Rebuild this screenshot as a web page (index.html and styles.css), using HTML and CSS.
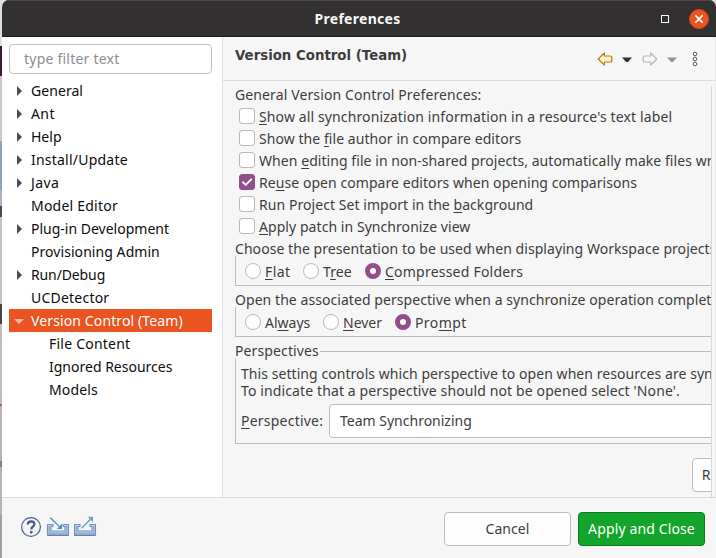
FILE: index.html
```html
<!DOCTYPE html>
<html lang="en">
<head>
<meta charset="utf-8">
<title>Preferences</title>
<link rel="stylesheet" href="styles.css">
</head>
<body>
<div class="desktop">
<div class="window">
  <header class="titlebar">
    <h1>Preferences</h1>
    <div class="window-buttons">
      <span class="maximize"></span>
      <span class="close"><svg width="20" height="20" viewBox="0 0 20 20"><path d="M6.4 6.4l7.2 7.2M13.6 6.4l-7.2 7.2" stroke="#fff" stroke-width="1.6"/></svg></span>
    </div>
  </header>
  <main class="content">
    <nav class="sidebar">
      <div class="filter ls2">type filter text</div>
      <ul class="tree">
        <li class="item parent">General</li>
        <li class="item parent ls4">Ant</li>
        <li class="item parent ls0">Help</li>
        <li class="item parent ls2">Install/Update</li>
        <li class="item parent ls4">Java</li>
        <li class="item ls2">Model Editor</li>
        <li class="item parent ls0">Plug-in Development</li>
        <li class="item">Provisioning Admin</li>
        <li class="item parent lsn">Run/Debug</li>
        <li class="item ls2">UCDetector</li>
        <li class="item open ls1">Version Control (Team)</li>
        <li class="item child ls2">File Content</li>
        <li class="item child ls0">Ignored Resources</li>
        <li class="item child ls1">Models</li>
      </ul>
    </nav>
    <section class="page">
      <div class="page-head">
        <h2>Version Control (Team)</h2>
        <div class="tools">
          <svg class="arrow" width="16" height="14" viewBox="0 0 16 14"><path d="M1.2 7L7.3 .9V4H13.2Q14.8 4 14.8 5.6V8.4Q14.8 10 13.2 10H7.3V13.1Z" fill="#fdf3c4" stroke="#b87a13" stroke-width="1.2" stroke-linejoin="round"/></svg>
          <svg class="caret" width="10" height="6" viewBox="0 0 10 6"><path d="M0 .5H10L6 5H4Z" fill="#2f3335"/></svg>
          <svg class="arrow" width="16" height="14" viewBox="0 0 16 14"><path d="M14.8 7L8.7 .9V4H2.8Q1.2 4 1.2 5.6V8.4Q1.2 10 2.8 10H8.7V13.1Z" fill="#f7f7f7" stroke="#b4b4b4" stroke-width="1.2" stroke-linejoin="round"/></svg>
          <svg class="caret" width="10" height="6" viewBox="0 0 10 6"><path d="M0 .5H10L6 5H4Z" fill="#929595"/></svg>
          <svg class="dots" width="6" height="16" viewBox="0 0 6 16" fill="#fff" stroke="#565656" stroke-width="1"><circle cx="3" cy="3" r="1.8"/><circle cx="3" cy="8" r="1.8"/><circle cx="3" cy="13" r="1.8"/></svg>
        </div>
      </div>
      <div class="viewport">
        <div class="intro ls1">General Version Control Preferences:</div>
        <div class="option"><i class="check"></i><span class="ls1"><u>S</u>how all synchronization information in a resource's text label</span></div>
        <div class="option"><i class="check"></i><span>Show the <u>f</u>ile author in compare editors</span></div>
        <div class="option"><i class="check"></i><span>When <u>e</u>diting file in non-shared projects, automatically make files writable</span></div>
        <div class="option"><i class="check on"><svg width="16" height="16" viewBox="0 0 16 16"><path d="M3.4 7.6L6.7 10.9L12.7 4.8" fill="none" stroke="#fff" stroke-width="1.8"/></svg></i><span>Re<u>u</u>se open compare editors when opening comparisons</span></div>
        <div class="option"><i class="check"></i><span>Run Project Set import in the <u>b</u>ackground</span></div>
        <div class="option"><i class="check"></i><span><u>A</u>pply patch in Synchronize view</span></div>
        <div class="group">
          <div class="legend">Choose the presentation to be used when displaying Workspace projects</div>
          <div class="radios">
            <span class="radio flat ls4"><i class="dot"></i><span><u>F</u>lat</span></span>
            <span class="radio tree-mode ls1"><i class="dot"></i><span>T<u>r</u>ee</span></span>
            <span class="radio ls2"><i class="dot on"></i><span><u>C</u>ompressed Folders</span></span>
          </div>
        </div>
        <div class="group second">
          <div class="legend">Open the associated perspective when a synchronize operation completes</div>
          <div class="radios">
            <span class="radio always ls0"><i class="dot"></i><span>Al<u>w</u>ays</span></span>
            <span class="radio never ls0"><i class="dot"></i><span><u>N</u>ever</span></span>
            <span class="radio ls4"><i class="dot on"></i><span>Pro<u>m</u>pt</span></span>
          </div>
        </div>
        <div class="group third">
          <div class="legend ruled ls1">Perspectives</div>
          <div class="persp">
            <p>This setting controls which perspective to open when resources are synchronized.</p>
            <p class="ls1">To indicate that a perspective should not be opened select 'None'.</p>
            <div class="field"><label class="ls2"><u>P</u>erspective:</label><div class="combo ls0">Team Synchronizing</div></div>
          </div>
        </div>
        <button class="btn restore">Restore Defaults</button>
      </div>
    </section>
  </main>
  <footer class="footer">
    <div class="footer-icons">
      <svg width="22" height="22" viewBox="0 0 22 22"><circle cx="11" cy="11" r="9.4" fill="#f3f4f6" stroke="#525f80" stroke-width="1.2"/><path d="M7.7 8.5Q7.9 5.3 11.2 5.3Q14.4 5.4 14.4 8.1Q14.4 9.7 12.7 10.7Q11.3 11.5 11.3 13.4" fill="none" stroke="#465783" stroke-width="2.2"/><rect x="10" y="15" width="2.6" height="2.4" rx=".8" fill="#465783"/></svg>
      <svg class="import" width="24" height="22" viewBox="0 0 24 22"><path d="M1.5 9.5H7V11.5H5V16H19V11.5H17V9.5H22.5V20.2H1.5Z" fill="#c3d1e9" stroke="#7490c2" stroke-width="1.1"/><path d="M3.2 11V18.3H20.8V11" fill="none" stroke="#93aad2" stroke-width="1.4"/><path d="M1.5 20.3H22.5" stroke="#5d78ac" stroke-width="1.2"/><path d="M4.3 2.6L13.5 11.8" stroke="#5a9fca" stroke-width="1.5"/><path d="M16 8.8V14H10.8Z" fill="#4593b8"/></svg>
      <svg class="export" width="24" height="22" viewBox="0 0 24 22"><path d="M1.5 9.5H7V11.5H5V16H19V11.5H17V9.5H22.5V20.2H1.5Z" fill="#c3d1e9" stroke="#7490c2" stroke-width="1.1"/><path d="M3.2 11V18.3H20.8V11" fill="none" stroke="#93aad2" stroke-width="1.4"/><path d="M1.5 20.3H22.5" stroke="#5d78ac" stroke-width="1.2"/><path d="M8.5 13.2L18 3.7" stroke="#5a9fca" stroke-width="1.5"/><path d="M14.6 1.8H20V7.2Z" fill="#6fa6bd"/></svg>
    </div>
    <button class="btn cancel">Cancel</button>
    <button class="btn apply ls1">Apply and Close</button>
  </footer>
</div>
</div>
</body>
</html>
```

FILE: styles.css
```css
* { box-sizing: border-box; }

body {
  margin: 0;
  font: 14px/22px "Noto Sans", "Open Sans", sans-serif;
  letter-spacing: .06px;
  color: #3d3d3d;
}

.lsn { letter-spacing: -.12px; }
.ls0 { letter-spacing: 0; }
.ls1 { letter-spacing: .12px; }
.ls2 { letter-spacing: .22px; }
.ls4 { letter-spacing: .4px; }

/* Sliver of the windows lying behind the dialog */
.desktop {
  width: 716px;
  height: 558px;
  padding-left: 2px;
  overflow: hidden;
  background: linear-gradient(#dedede 0 46px, #3a1a35 46px 76px, #c9c9c9 76px 141px, #8da3bb 141px 190px, #a9b4c0 190px 206px, #4a4a4e 206px 217px, #c4c4c4 217px 304px, #444 304px 324px, #bdbdbd 324px 404px, #c8502c 404px 406px, #b5b5b5 406px 461px, #8c8078 461px 467px, #b5b5b5 467px 515px, #a0a0a0 515px);
}

.window {
  display: flex;
  flex-direction: column;
  height: 558px;
  background: #f6f6f6;
  border-radius: 7px 7px 0 0;
  overflow: hidden;
}

.titlebar {
  display: grid;
  grid-template-columns: 1fr auto 1fr;
  align-items: center;
  flex: none;
  height: 37px;
  background: #323030;
  border-top: 1px solid #4c4a4a;
  border-bottom: 1px solid #1d1c1c;
}
.titlebar h1 {
  grid-column: 2;
  margin: 1px 3px 0 0;
  font-size: 14px;
  letter-spacing: .28px;
  color: #f7f7f7;
}
.window-buttons {
  display: flex;
  align-items: center;
  justify-content: flex-end;
  gap: 20px;
  padding-right: 7px;
}
.maximize { width: 8px; height: 8px; border: 1px solid #fff; }
.close { width: 20px; height: 20px; border-radius: 50%; background: #e95420; border: 1px solid #d14918; }
.close svg { display: block; margin: -1px; }

.content { display: flex; flex: none; height: 460px; }

.sidebar {
  flex: none;
  width: 221px;
  padding: 7px 10px 0 7px;
  background: #fff;
  border-right: 1px solid #e3e3e3;
}
.filter {
  height: 30px;
  padding-left: 14px;
  border: 1px solid #c0c0c0;
  border-radius: 4px;
  line-height: 28px;
  color: #8b8e8f;
}
.tree { margin: 5px 0 0; padding: 0; list-style: none; color: #0c0c0c; }
.item {
  display: flex;
  align-items: center;
  height: 23px;
  padding-left: 22px;
  line-height: 23px;
  white-space: nowrap;
}
.item.child { padding-left: 40px; }
.item.parent, .item.open { padding-left: 0; }
.parent::before {
  content: "";
  margin: 0 9px 0 8px;
  border: solid transparent;
  border-width: 5px 0 5px 5px;
  border-left-color: #4c4c4c;
}
.open { background: #e95420; color: #fff; }
.open::before {
  content: "";
  margin: 1px 7px 0 5px;
  border: solid transparent;
  border-width: 5px 5px 0;
  border-top-color: #f6b8a1;
}

.page { flex: 1; min-width: 0; border-right: 1px solid #ebebeb; }
.page-head {
  display: flex;
  justify-content: space-between;
  height: 44px;
  padding: 7px 17px 0 12px;
  border-bottom: 1px solid #dadada;
}
.page-head h2 {
  margin: 1px 0 0;
  font: bold 13.33px/22px "DejaVu Sans", sans-serif;
  letter-spacing: 0;
}
.tools { display: flex; align-items: center; height: 30px; }
.tools .caret { margin: 1px 10px 0 9px; }
.tools .dots { margin: 0 0 0 5px; }

.viewport {
  display: flow-root;
  width: 477px;
  height: 411px;
  margin: 5px 0 0 12px;
  border-right: 1px solid #d8d8d8;
  overflow: hidden;
  white-space: nowrap;
}
.intro { height: 19px; line-height: 18px; }

/* Labels sit one pixel below the centre line of their control */
.option { display: flex; align-items: center; gap: 4px; height: 22px; padding-left: 4px; }
.option span, .radio span { padding-top: 2px; }
u { text-decoration: underline 1px; text-underline-offset: 2px; text-decoration-skip-ink: none; }
.check, .dot {
  flex: none;
  width: 16px;
  height: 16px;
  border: 1px solid #b9b9b9;
  background: #fff;
}
.check { border-radius: 3px; }
.check.on { background: #924d8b; border-color: #924d8b; }
.check svg { display: block; margin: -1px; }
.dot { border-radius: 50%; }
.dot.on { border: 5px solid #924d8b; }

.group .legend { height: 19px; line-height: 24px; }
.radios {
  display: flex;
  align-items: center;
  height: 30px;
  padding-left: 9px;
  border-left: 1px solid #bcbcbc;
  border-bottom: 1px solid #bcbcbc;
}
.radio { display: flex; align-items: center; gap: 4px; }
.flat { width: 58px; }
.tree-mode { width: 62px; }
.always { width: 78px; }
.never { width: 72px; }
.second { margin-top: 2px; }
.third { margin-top: 2px; }
.group .ruled { display: flex; align-items: center; gap: 1px; line-height: 22px; padding-top: 5px; }
.ruled::after { content: ""; flex: 1; height: 1px; margin-top: 1px; background: #bcbcbc; }
.persp {
  height: 86px;
  padding: 7px 0 0 5px;
  border-left: 1px solid #bcbcbc;
  border-bottom: 1px solid #bcbcbc;
}
.persp p { margin: 0; height: 17px; line-height: 17px; }
.field { display: flex; align-items: center; margin-top: 5px; }
.field label { flex: none; width: 88px; }
.combo {
  flex: none;
  width: 480px;
  height: 34px;
  padding-left: 10px;
  border: 1px solid #bcbcbc;
  border-radius: 4px;
  background: #fff;
  line-height: 32px;
}

.btn {
  flex: none;
  height: 34px;
  padding: 0;
  border: 1px solid #bcbcbc;
  border-radius: 4px;
  background: #fdfdfd;
  font: inherit;
  letter-spacing: inherit;
  color: #3d3d3d;
}
.restore { display: block; width: 129px; margin: 14px 0 0 457px; }

.footer {
  display: flex;
  align-items: flex-start;
  flex: 1;
  padding: 14px 11px 0 18px;
  border-top: 1px solid #dadada;
}
.footer-icons { display: flex; flex: 1; padding-top: 4px; }
.import { margin-left: 4px; }
.export { margin-left: 3px; }
.import, .export { margin-top: -1px; }
.cancel { width: 127px; }
.apply { width: 127px; margin-left: 7px; background: #13a52b; border-color: #0c7a1f; color: #fff; letter-spacing: .13px; }
```
